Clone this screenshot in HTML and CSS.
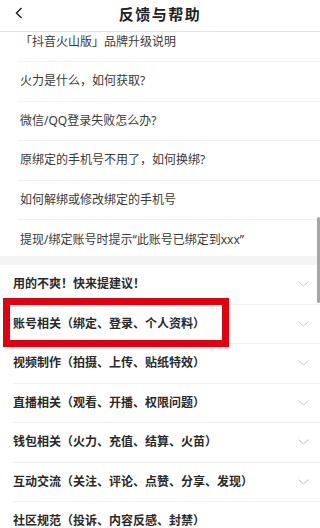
FILE: index.html
```html
<!DOCTYPE html>
<html lang="zh-CN">
<head>
<meta charset="utf-8">
<link rel="stylesheet" href="styles.css">
</head>
<body>
<div class="page">
  <header class="topbar">
    <svg class="back" width="8" height="12" viewBox="0 0 8 12"><path d="M6.5 1 L1.5 6 L6.5 11" fill="none" stroke="#222" stroke-width="1.5"/></svg>
    <h1 class="title">反馈与帮助</h1>
  </header>
  <ul class="questions">
    <li class="q first">「抖音火山版」品牌升级说明</li>
    <li class="q">火力是什么，如何获取?</li>
    <li class="q">微信/QQ登录失败怎么办?</li>
    <li class="q">原绑定的手机号不用了，如何换绑?</li>
    <li class="q">如何解绑或修改绑定的手机号</li>
    <li class="q last">提现/绑定账号时提示“此账号已绑定到xxx”</li>
  </ul>
  <div class="band"></div>
  <ul class="sections">
    <li class="s"><span>用的不爽！快来提建议！</span><svg class="chev" width="11" height="6" viewBox="0 0 11 6"><path d="M0.5 0.5 L5.5 5 L10.5 0.5" fill="none" stroke="#c4c4c4" stroke-width="1"/></svg></li>
    <li class="s"><span>账号相关（绑定、登录、个人资料）</span><svg class="chev" width="11" height="6" viewBox="0 0 11 6"><path d="M0.5 0.5 L5.5 5 L10.5 0.5" fill="none" stroke="#c4c4c4" stroke-width="1"/></svg></li>
    <li class="s"><span>视频制作（拍摄、上传、贴纸特效）</span><svg class="chev" width="11" height="6" viewBox="0 0 11 6"><path d="M0.5 0.5 L5.5 5 L10.5 0.5" fill="none" stroke="#c4c4c4" stroke-width="1"/></svg></li>
    <li class="s"><span>直播相关（观看、开播、权限问题）</span><svg class="chev" width="11" height="6" viewBox="0 0 11 6"><path d="M0.5 0.5 L5.5 5 L10.5 0.5" fill="none" stroke="#c4c4c4" stroke-width="1"/></svg></li>
    <li class="s"><span>钱包相关（火力、充值、结算、火苗）</span><svg class="chev" width="11" height="6" viewBox="0 0 11 6"><path d="M0.5 0.5 L5.5 5 L10.5 0.5" fill="none" stroke="#c4c4c4" stroke-width="1"/></svg></li>
    <li class="s"><span>互动交流（关注、评论、点赞、分享、发现）</span><svg class="chev" width="11" height="6" viewBox="0 0 11 6"><path d="M0.5 0.5 L5.5 5 L10.5 0.5" fill="none" stroke="#c4c4c4" stroke-width="1"/></svg></li>
    <li class="s"><span>社区规范（投诉、内容反感、封禁）</span></li>
  </ul>
  <div class="highlight"></div>
  <div class="scrollbar"></div>
</div>
</body>
</html>
```

FILE: styles.css
```css
* { box-sizing: border-box; }
html, body { margin: 0; padding: 0; background: #fff; }
body {
  font-family: "Noto Sans", "Noto Sans CJK SC", sans-serif;
  width: 320px;
  height: 528px;
  overflow: hidden;
}
.page {
  position: relative;
  width: 320px;
  height: 528px;
  overflow: hidden;
}
.topbar {
  height: 32px;
  border-bottom: 1px solid #e4e4e4;
  display: flex;
  align-items: center;
  justify-content: center;
  position: relative;
  padding-bottom: 4px;
}
.back {
  position: absolute;
  left: 15px;
  top: 7px;
}
.title {
  margin: 0;
  font-family: "Noto Sans CJK SC", sans-serif;
  font-size: 15px;
  font-weight: 700;
  letter-spacing: 1.5px;
  color: #222;
  line-height: 20px;
}
.questions, .sections {
  list-style: none;
  margin: 0;
  padding: 0;
}
.q {
  height: 39.5px;
  margin-left: 18px;
  padding-left: 2px;
  border-bottom: 1px solid #f0f0f0;
  display: flex;
  align-items: center;
  font-size: 12px;
  color: #3a3a3a;
  line-height: 16px;
}
.q.first {
  height: 30px;
  padding-bottom: 10px;
}
.q.last {
  height: 36px;
  padding-top: 4px;
  border-bottom: none;
}
.band {
  height: 9px;
  background: #f4f4f4;
}
.s {
  height: 39.5px;
  margin-left: 13px;
  padding-right: 11px;
  border-bottom: 1px solid #f0f0f0;
  display: flex;
  align-items: center;
  justify-content: space-between;
  font-size: 12px;
  font-weight: 700;
  color: #2a2a2a;
  line-height: 16px;
}
.chev { flex: none; }
.highlight {
  position: absolute;
  left: 3px;
  top: 298px;
  width: 226px;
  height: 49px;
  border: 7px solid #e3000f;
}
.scrollbar {
  position: absolute;
  right: 0;
  top: 217px;
  width: 3px;
  height: 86px;
  border-radius: 2px;
  background: #a6a6a6;
}
```
